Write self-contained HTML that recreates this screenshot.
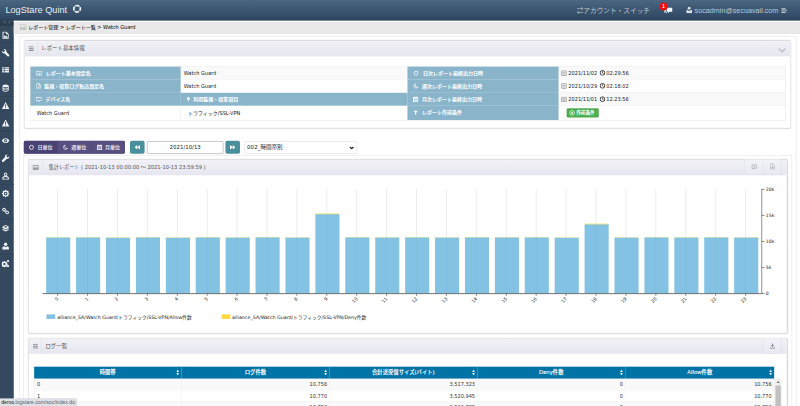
<!DOCTYPE html>
<html lang="ja">
<head>
<meta charset="utf-8">
<title>LogStare Quint</title>
<style>
html,body{margin:0;padding:0;width:800px;height:406px;overflow:hidden;background:#fff;}
#root{position:absolute;left:0;top:0;width:1920px;height:975px;transform:scale(0.416667);transform-origin:0 0;overflow:hidden;background:#fff;
  font-family:"DejaVu Sans","Liberation Sans","Noto Sans CJK JP",sans-serif;font-size:12px;color:#333;-webkit-text-stroke:0;}
#root *{box-sizing:border-box;}
.abs{position:absolute;}
#hdr{left:0;top:0;width:1920px;height:50px;background:linear-gradient(#4a6681,#2f4762 90%,#243850);}
#logo{-webkit-text-stroke:0;left:13px;top:7px;font:22px/32px "Liberation Sans","Noto Sans CJK JP",sans-serif;color:#e8eef4;white-space:nowrap;}
.hr{-webkit-text-stroke:0;color:#bcc7d3;font:16px/24px "Liberation Sans","Noto Sans CJK JP",sans-serif;white-space:nowrap;top:13px;}
#side{left:0;top:49px;width:33px;height:927px;background:#34495e;}
#side .tog{height:15px;background:#2b3c4e;color:#5d7186;font:bold 11px/13px "Liberation Mono",monospace;text-align:center;letter-spacing:-1px;border-bottom:1px solid #3d5268;}
#side .it{height:42.200px;border-bottom:1px solid #2a3b4d;border-top:1px solid #3f566e;position:relative;}
#side .it:last-child{border-bottom:none;}
#side .it svg{position:absolute;left:4px;top:10px;width:19px;height:19px;fill:#eef2f5;}
#bc{left:33px;top:50px;width:1887px;height:31px;background:#e9e9e9;border-top:3px solid #fff;border-bottom:1px solid #dcdcdc;font-size:12px;line-height:26px;color:#2a2a2a;-webkit-text-stroke:0.200px #2a2a2a;padding-left:35px;white-space:nowrap;}
.outer{border:1px solid #e0e0e0;background:#fff;box-shadow:0 0 2px rgba(0,0,0,.08);}
.panel{border:1px solid #d6d6d6;border-radius:4px;background:#fff;box-shadow:0 0 3px rgba(0,0,0,.16);}
.ph{left:0;top:0;right:0;height:36.500px;background:linear-gradient(#f1f1f7,#e6e6f0);border-bottom:1px solid #e2e2ea;border-radius:3px 3px 0 0;}
.ph .ic{left:0;top:0;width:31px;height:35.500px;border-right:1px solid #dcdce4;}
.ph .tt{left:40px;top:0;line-height:35.500px;font-size:13px;color:#555;white-space:nowrap;}
.ph .btn{top:-1px;width:44px;height:37px;border-left:1px solid #dcdce4;border-bottom:1px solid #dcdce4;background:linear-gradient(#f2f2f8,#e9e9f2);}
.cell{font-size:12px;line-height:30px;white-space:nowrap;border-bottom:1px solid #e4e4e4;}
.lab{background:#8ab4c9;color:#fff;font-weight:500;-webkit-text-stroke:0.250px #fff;border-bottom:1px solid #a9c8d8;border-right:1px solid #a9c8d8;}
.val{background:#fff;color:#222;border-right:1px solid #e4e4e4;}
.val.alt{background:#f9f9f9;}
.dt svg{position:absolute;}
.tbtn{top:0;height:31px;color:#e9e6f2;font-weight:500;-webkit-text-stroke:0.150px #e9e6f2;font-size:12px;line-height:31px;white-space:nowrap;}
.th{top:0;height:29.200px;background:#0073a6;color:#fff;font-weight:500;-webkit-text-stroke:0.250px #fff;font-size:12.800px;line-height:27px;text-align:center;border-right:1px solid #5aa7c9;white-space:nowrap;}
.td{height:27.500px;font-size:12px;line-height:27px;border-bottom:1px solid #e3e3e3;border-right:1px solid #e3e3e3;color:#333;white-space:nowrap;padding:0 5px 0 6px;}
.tick{font-size:11px;fill:#222;font-family:"DejaVu Sans","Liberation Sans",sans-serif;}
</style>
</head>
<body>
<div id="root">

<div id="hdr" class="abs">
  <div id="logo" class="abs">LogStare Quint</div>
  <svg class="abs" style="left:172.500px;top:9.200px" width="24" height="24" viewBox="0 0 24 24"><circle cx="12" cy="12" r="7.900" fill="none" stroke="#f6f8fb" stroke-width="4" stroke-dasharray="10.410 2" stroke-dashoffset="5.200"/></svg>
  <div class="hr abs" style="left:1384px;font-size:16px;">⇄アカウント・スイッチ</div>
  <svg class="abs" style="left:1593px;top:18px" width="21" height="15" viewBox="0 0 21 15"><path d="M7 0h14v10h-7l-3.500 3.500V10H7z" fill="#f4f6f9"/><path d="M1 3.500h4.500v8H8v3.500L4.500 12H1z" fill="#cbd5df"/></svg>
  <div class="abs" style="left:1583px;top:6px;width:19px;height:19px;border-radius:10px;background:#f20d0d;color:#fff;font:bold 11px/19px 'Liberation Sans',sans-serif;text-align:center;">1</div>
  <svg class="abs" style="left:1647px;top:16px" width="14" height="16" viewBox="0 0 14 16"><circle cx="7" cy="3.800" r="3.400" fill="#dbe2ea"/><path d="M0 16V10.500c0-1.500 1.500-2.500 3.500-2.700L7 10.800l3.500-3c2 .2 3.500 1.200 3.500 2.700V16z" fill="#dbe2ea"/></svg>
  <div class="hr abs" style="left:1667px;font-family:'Liberation Sans',sans-serif;font-size:17.300px;">socadmin@secuavail.com</div>
  <svg class="abs" style="left:1875px;top:19px" width="15" height="12" viewBox="0 0 15 12"><path d="M0 0h10.500v2.200H0zM0 3.200h10.500v2.200H0zM0 6.500h10.500v2.200H0zM0 9.800h10.500V12H0z" fill="#b9c4cf"/><path d="M11.500 3.500l3.500 2.500-3.500 2.500z" fill="#b9c4cf"/></svg>
</div>

<div id="side" class="abs">
  <div class="tog">&lt; &gt;</div>
  <div class="it"><svg viewBox="0 0 18 18"><path d="M2 1h9l5 5v11H2z M4 3v12h10V7h-4V3z M5 11l2-2 2 3 2-1.5 2 2.5v1H5z" fill-rule="evenodd"/></svg></div>
  <div class="it"><svg viewBox="0 0 18 18"><path d="M4.200 .8a5.200 5.200 0 0 1 6.400 6.300l6.300 6.300a2.600 2.600 0 0 1-3.700 3.700L6.900 10.800A5.200 5.200 0 0 1 .7 4.300l3.100 3.100 2.700-.7.700-2.700z"/></svg></div>
  <div class="it"><svg viewBox="0 0 18 18"><path d="M1 2h4v3H1zM6.500 2H17v3H6.500zM1 6.500h4v3H1zM6.500 6.500H17v3H6.500zM1 11h4v3H1zM6.500 11H17v3H6.500z"/></svg></div>
  <div class="it"><svg viewBox="0 0 18 18"><path d="M2 4c0-1.700 3.100-3 7-3s7 1.300 7 3v10c0 1.700-3.100 3-7 3s-7-1.300-7-3z M4 6.300v2.400c.8.800 2.700 1.300 5 1.300s4.200-.5 5-1.300V6.300C12.800 6.800 11 7 9 7s-3.800-.2-5-.7z M4 11.300v2.400c.8.800 2.700 1.300 5 1.300s4.200-.5 5-1.300v-2.400c-1.200.5-3 .7-5 .7s-3.800-.2-5-.7z" fill-rule="evenodd"/></svg></div>
  <div class="it"><svg viewBox="0 0 18 18"><path d="M9 1l8.500 15.500H.5z M8 6v5.500h2V6z M8 12.700v2h2v-2z" fill-rule="evenodd"/></svg></div>
  <div class="it"><svg viewBox="0 0 18 18"><path d="M9 1l8.500 15.500H.5z M8 6v5.500h2V6z M8 12.700v2h2v-2z" fill-rule="evenodd"/></svg></div>
  <div class="it"><svg viewBox="0 0 18 18"><path d="M.5 9c2-3.600 5-5.500 8.500-5.500s6.500 1.900 8.500 5.500c-2 3.600-5 5.500-8.500 5.500S2.500 12.600.5 9z M9 5.500a3.500 3.500 0 1 0 0 7 3.500 3.500 0 0 0 0-7z M9 7.300a1.700 1.700 0 1 1 0 3.400 1.700 1.700 0 0 1 0-3.400z" fill-rule="evenodd"/></svg></div>
  <div class="it"><svg viewBox="0 0 18 18"><path d="M13.800 .8a5.200 5.200 0 0 0-6.400 6.300l-6.300 6.300a2.600 2.600 0 0 0 3.700 3.700l6.300-6.300a5.200 5.200 0 0 0 6.200-6.500l-3.100 3.100-2.700-.7-.7-2.700z"/></svg></div>
  <div class="it"><svg viewBox="0 0 18 18"><path d="M9 1a4 4 0 0 1 4 4c0 1.600-.8 3-2 3.800 3 .7 5.500 2.700 5.500 5.200v3h-15v-3c0-2.500 2.500-4.500 5.500-5.200A4.500 4.500 0 0 1 5 5a4 4 0 0 1 4-4z M9 3a2 2 0 0 0 0 4 2 2 0 0 0 0-4z M4 14v1h10v-1c0-1.500-2.500-3-5-3s-5 1.500-5 3z" fill-rule="evenodd"/></svg></div>
  <div class="it"><svg viewBox="0 0 18 18"><path d="M17.52 7.82L17.52 10.18L15.58 10.72L14.87 12.44L15.86 14.19L14.19 15.86L12.44 14.87L10.72 15.58L10.18 17.52L7.82 17.52L7.28 15.58L5.56 14.87L3.81 15.86L2.14 14.19L3.13 12.44L2.42 10.72L0.48 10.18L0.48 7.82L2.42 7.28L3.13 5.56L2.14 3.81L3.81 2.14L5.56 3.13L7.28 2.42L7.82 0.48L10.18 0.48L10.72 2.42L12.44 3.13L14.19 2.14L15.86 3.81L14.87 5.56L15.58 7.28z M9 4.800a4.200 4.200 0 1 0 0 8.400 4.200 4.200 0 0 0 0-8.400z" fill-rule="evenodd"/><circle cx="9" cy="9" r="1.900"/></svg></div>
  <div class="it"><svg viewBox="0 0 18 18"><g fill="none" stroke="#eef2f5" stroke-width="2.300"><ellipse cx="5.600" cy="6" rx="3.300" ry="2.800" transform="rotate(35 5.600 6)"/><ellipse cx="12.400" cy="12" rx="3.300" ry="2.800" transform="rotate(35 12.400 12)"/></g><path d="M7.500 7.500l3 3" stroke="#c3ccd5" stroke-width="2.400" fill="none"/></svg></div>
  <div class="it"><svg viewBox="0 0 18 18"><path d="M9 1l7 3.500v3L9 11 2 7.500v-3z M9 3L5 5l4 2 4-2z M2 9.500l7 3.500 7-3.500v3L9 16l-7-3.500z" fill-rule="evenodd"/></svg></div>
  <div class="it"><svg viewBox="0 0 18 18"><circle cx="9" cy="5" r="3.800"/><path d="M1.500 17v-4c0-2 2-3.500 4.500-3.800l3 2.300 3-2.300c2.500.3 4.500 1.800 4.500 3.800v4z"/></svg></div>
  <div class="it"><svg viewBox="0 0 18 18"><path d="M5 3h2.500l.4 1.700 1.300.6 1.500-.9 1.700 1.700-.9 1.500.6 1.300 1.700.4v2.500l-1.700.4-.6 1.300.9 1.500-1.700 1.700-1.500-.9-1.300.6-.4 1.600H5l-.4-1.600-1.300-.6-1.500.9L.1 14.500l.9-1.500-.6-1.300L0 11.500V9l.4-.1.600-1.300-.9-1.500 1.700-1.700 1.500.9 1.300-.6z M6.200 7.800a2.500 2.500 0 1 0 0 5 2.500 2.500 0 0 0 0-5z" fill-rule="evenodd"/><circle cx="14.500" cy="3.500" r="2.500"/><circle cx="14.500" cy="15" r="2.500"/></svg></div>
</div>

<div id="bc" class="abs">レポート管理 &gt; レポート一覧 &gt; Watch Guard</div>
<svg class="abs" style="left:48px;top:58px" width="16" height="14" viewBox="0 0 16 14"><rect x="0" y="0" width="16" height="14" rx="1" fill="#bcc2bc"/><rect x="1.800" y="1.800" width="12.400" height="10.400" fill="#e2e6e2"/><path d="M2 12V9.500l3-3.500 2.500 2.500L11 5l3 4.500V12z" fill="#c0c7c0"/><circle cx="5" cy="4.800" r="1.400" fill="#fff"/></svg>

<div class="abs outer" style="left:47px;top:87px;width:1864px;height:900px;"></div>

<div class="abs panel" style="left:58px;top:98px;width:1840px;height:210px;">
  <div class="abs ph">
    <div class="abs ic"><svg class="abs" style="left:10px;top:12px" width="12" height="12" viewBox="0 0 12 12"><path d="M0 0h12v2.600H0zM0 4.500h12v2.600H0zM0 9h12v2.600H0z" fill="#888"/></svg></div>
    <div class="abs tt">レポート基本情報</div>
    <svg class="abs" style="right:10px;top:15px" width="20" height="14" viewBox="0 0 20 14"><path d="M2 2.500l8 8 8-8" fill="none" stroke="#c4c4cb" stroke-width="3.600"/></svg>
  </div>
  <div id="info" class="abs" style="left:13px;top:60px;width:1813px;height:130px;border:1px solid #dcdcdc;">
<div class="abs cell lab" style="left:0px;top:0px;width:361px;height:31.4px;"><svg class="abs" style="left:13px;top:10px" width="14" height="12" viewBox="0 0 14 12"><path d="M0 0h14v12H0z M1.500 1.500v9h11v-9z M3 9l2.500-3.500 2 2L10 4l1.500 5z" fill="#fff" fill-rule="evenodd"/></svg><span class="abs" style="left:37px">レポート基本設定名</span></div>
<div class="abs cell val alt" style="left:361px;top:0px;width:544px;height:31.4px;padding-left:7px;">Watch Guard</div>
<div class="abs cell lab" style="left:905px;top:0px;width:363px;height:31.4px;"><svg class="abs" style="left:14px;top:9px" width="13" height="13" viewBox="0 0 13 13"><circle cx="6.500" cy="6.500" r="4.800" fill="none" stroke="#fff" stroke-width="2"/></svg><span class="abs" style="left:37px">日次レポート最終出力日時</span></div>
<div class="abs cell val alt" style="left:1268px;top:0px;width:543px;height:31.4px;border-right:none;"><svg class="abs" style="left:6px;top:9px" width="13" height="13" viewBox="0 0 13 13"><path d="M.8 .8h11.400v11.400H.8z" fill="#fff" stroke="#6a6a6a" stroke-width="1.600"/><path d="M3 4.300h7M3 6.500h7M3 8.800h7" stroke="#808080" stroke-width="1.200" fill="none"/></svg><span class="abs" style="left:23px">2021/11/02</span><svg class="abs" style="left:98px;top:8px" width="14" height="14" viewBox="0 0 14 14"><circle cx="7" cy="7" r="5.700" fill="none" stroke="#222" stroke-width="2.100"/><path d="M7 3.300V7l2.600 1.500" fill="none" stroke="#222" stroke-width="1.700"/></svg><span class="abs" style="left:114px">02:29:56</span></div>
<div class="abs cell lab" style="left:0px;top:31.4px;width:361px;height:31.3px;"><svg class="abs" style="left:14px;top:9px" width="11" height="13" viewBox="0 0 11 13"><path d="M0 0h7l4 4v9H0z M1.500 1.500v10h8V5H6V1.500z M3 7h5v1H3z M3 9h5v1H3z" fill="#fff" fill-rule="evenodd"/></svg><span class="abs" style="left:33px">監視・収集ログ取込設定名</span></div>
<div class="abs cell val" style="left:361px;top:31.4px;width:544px;height:31.3px;padding-left:7px;">Watch Guard</div>
<div class="abs cell lab" style="left:905px;top:31.4px;width:363px;height:31.3px;"><svg class="abs" style="left:14px;top:9px" width="12" height="13" viewBox="0 0 12 13"><path d="M5.500 1.200a5.200 5.200 0 1 0 5.500 7.300A4.600 4.600 0 0 1 5.500 1.200z" fill="none" stroke="#fff" stroke-width="1.800" stroke-linejoin="round"/></svg><span class="abs" style="left:35px">週次レポート最終出力日時</span></div>
<div class="abs cell val" style="left:1268px;top:31.4px;width:543px;height:31.3px;border-right:none;"><svg class="abs" style="left:6px;top:9px" width="13" height="13" viewBox="0 0 13 13"><path d="M.8 .8h11.400v11.400H.8z" fill="#fff" stroke="#6a6a6a" stroke-width="1.600"/><path d="M3 4.300h7M3 6.500h7M3 8.800h7" stroke="#808080" stroke-width="1.200" fill="none"/></svg><span class="abs" style="left:23px">2021/10/29</span><svg class="abs" style="left:98px;top:8px" width="14" height="14" viewBox="0 0 14 14"><circle cx="7" cy="7" r="5.700" fill="none" stroke="#222" stroke-width="2.100"/><path d="M7 3.300V7l2.600 1.500" fill="none" stroke="#222" stroke-width="1.700"/></svg><span class="abs" style="left:114px">02:18:02</span></div>
<div class="abs cell lab" style="left:0px;top:62.7px;width:361px;height:31.3px;"><svg class="abs" style="left:13px;top:10px" width="14" height="12" viewBox="0 0 14 12"><path d="M0 0h14v9H0z M1.500 1.500v6h11v-6z M4 10.500h6V12H4z" fill="#fff" fill-rule="evenodd"/></svg><span class="abs" style="left:36px">デバイス名</span></div>
<div class="abs cell lab" style="left:361px;top:62.7px;width:544px;height:31.3px;"><svg class="abs" style="left:14px;top:9px" width="9" height="13" viewBox="0 0 9 13"><path d="M3 0h4L5.500 4.500H9L2.500 13 4 7H0z" fill="#fff"/></svg><span class="abs" style="left:30px">利用監視・収集項目</span></div>
<div class="abs cell lab" style="left:905px;top:62.7px;width:363px;height:31.3px;"><svg class="abs" style="left:13px;top:8px" width="13" height="14" viewBox="0 0 13 14"><path d="M0 2h13v12H0z M2.500 0h2v3h-2zM8.500 0h2v3h-2z" fill="#fff"/><path d="M1.200 5h10.600M4.700 5v8M8.300 5v8M1.200 7.800h10.600M1.200 10.500h10.600" stroke="#8ab4c9" stroke-width=".9" fill="none"/></svg><span class="abs" style="left:35px">月次レポート最終出力日時</span></div>
<div class="abs cell val alt" style="left:1268px;top:62.7px;width:543px;height:31.3px;border-right:none;"><svg class="abs" style="left:6px;top:9px" width="13" height="13" viewBox="0 0 13 13"><path d="M.8 .8h11.400v11.400H.8z" fill="#fff" stroke="#6a6a6a" stroke-width="1.600"/><path d="M3 4.300h7M3 6.500h7M3 8.800h7" stroke="#808080" stroke-width="1.200" fill="none"/></svg><span class="abs" style="left:23px">2021/11/01</span><svg class="abs" style="left:98px;top:8px" width="14" height="14" viewBox="0 0 14 14"><circle cx="7" cy="7" r="5.700" fill="none" stroke="#222" stroke-width="2.100"/><path d="M7 3.300V7l2.600 1.500" fill="none" stroke="#222" stroke-width="1.700"/></svg><span class="abs" style="left:114px">12:23:56</span></div>
<div class="abs cell val" style="left:0px;top:94px;width:361px;height:34px;padding-left:15px;border-bottom:none;line-height:35px;">Watch Guard</div>
<div class="abs cell val" style="left:361px;top:94px;width:544px;height:34px;padding-left:17px;border-bottom:none;line-height:35px;">トラフィック/SSL-VPN</div>
<div class="abs cell lab" style="left:905px;top:94px;width:363px;height:34px;border-bottom:none;line-height:32px;"><svg class="abs" style="left:14px;top:11px" width="11" height="11" viewBox="0 0 11 11"><path d="M0 0h11L6.800 5v6L4.200 9V5z" fill="#fff"/></svg><span class="abs" style="left:35px">レポート作成条件</span></div>
<div class="abs cell val" style="left:1268px;top:94px;width:543px;height:34px;border-right:none;border-bottom:none;"><div class="abs" style="left:19px;top:6px;width:77px;height:22px;border-radius:3px;background:#4cae4c;border:1px solid #43a043;color:#fff;font-size:11px;line-height:20px;"><svg class="abs" style="left:5px;top:3px" width="14" height="14" viewBox="0 0 14 14"><circle cx="7" cy="7" r="5.600" fill="none" stroke="#fff" stroke-width="1.700"/><circle cx="7" cy="7" r="2.200" fill="#fff"/></svg><span class="abs" style="left:22px;font-weight:500;-webkit-text-stroke:0.200px #fff;">作成条件</span></div></div>
  </div>
</div>

<!-- toolbar -->
<div class="abs" style="left:57px;top:338px;width:243px;height:31px;border-radius:4px;background:#4b4372;overflow:hidden;">
  <div class="abs tbtn" style="left:0;width:81px;background:#4a4272;"><svg class="abs" style="left:12px;top:9px" width="13" height="13" viewBox="0 0 13 13"><circle cx="6.500" cy="6.500" r="4.800" fill="none" stroke="#fff" stroke-width="2"/></svg><span class="abs" style="left:33px">日単位</span></div>
  <div class="abs tbtn" style="left:81px;width:81px;background:#574f80;border-left:1px solid #4f4777;"><svg class="abs" style="left:12px;top:9px" width="12" height="13" viewBox="0 0 12 13"><path d="M5.500 1.200a5.200 5.200 0 1 0 5.500 7.300A4.600 4.600 0 0 1 5.500 1.200z" fill="none" stroke="#f0eef6" stroke-width="1.800" stroke-linejoin="round"/></svg><span class="abs" style="left:32px">週単位</span></div>
  <div class="abs tbtn" style="left:162px;width:81px;background:#574f80;border-left:1px solid #4f4777;"><svg class="abs" style="left:12px;top:8px" width="14" height="14" viewBox="0 0 13 14"><path d="M0 2h13v12H0z M2.500 0h2v3h-2zM8.500 0h2v3h-2z" fill="#f0eef6"/><path d="M1.200 5h10.600M4.700 5v8M8.300 5v8M1.200 7.800h10.600M1.200 10.500h10.600" stroke="#574f80" stroke-width=".9" fill="none"/></svg><span class="abs" style="left:32px">月単位</span></div>
</div>
<div class="abs" style="left:312px;top:338px;width:35px;height:31px;border-radius:4px;background:#4a8f9c;"><svg class="abs" style="left:11px;top:10px" width="13" height="11" viewBox="0 0 13 11"><path d="M6.500 0v11L0 5.500zM13 0v11L6.500 5.500z" fill="#fff"/></svg></div>
<div class="abs" style="left:353px;top:338.500px;width:183px;height:30px;border:1.500px solid #7d7d7d;border-radius:2px;background:#fff;text-align:center;font-size:13px;line-height:26px;color:#222;">2021/10/13</div>
<div class="abs" style="left:541px;top:338px;width:35px;height:31px;border-radius:4px;background:#4a8f9c;"><svg class="abs" style="left:11px;top:10px" width="13" height="11" viewBox="0 0 13 11"><path d="M0 0v11l6.500-5.500zM6.500 0v11L13 5.500z" fill="#fff"/></svg></div>
<div class="abs" style="left:587px;top:338.500px;width:270px;height:30px;border:1px solid #ccc;border-radius:4px;background:#fff;font-size:13.300px;line-height:28px;color:#222;padding-left:5px;">002_時間帯別<svg class="abs" style="right:6px;top:11px" width="12" height="8" viewBox="0 0 12 8"><path d="M1.500 1.500l4.500 4.500 4.500-4.500" fill="none" stroke="#111" stroke-width="2.800"/></svg></div>

<!-- wrapper -->
<div class="abs outer" style="left:56px;top:373px;width:1845px;height:700px;border-color:#dedede;"></div>

<!-- panel 2 -->
<div class="abs panel" style="left:68px;top:383px;width:1821px;height:417px;">
<svg class="abs" style="left:0;top:0" width="1821" height="417" viewBox="0 0 1821 417">
<line x1="69.2" y1="69.5" x2="69.2" y2="320.2" stroke="#e6e6e6" stroke-width="1.800"/>
<line x1="141.0" y1="69.5" x2="141.0" y2="320.2" stroke="#e6e6e6" stroke-width="1.800"/>
<line x1="212.8" y1="69.5" x2="212.8" y2="320.2" stroke="#e6e6e6" stroke-width="1.800"/>
<line x1="284.6" y1="69.5" x2="284.6" y2="320.2" stroke="#e6e6e6" stroke-width="1.800"/>
<line x1="356.4" y1="69.5" x2="356.4" y2="320.2" stroke="#e6e6e6" stroke-width="1.800"/>
<line x1="428.2" y1="69.5" x2="428.2" y2="320.2" stroke="#e6e6e6" stroke-width="1.800"/>
<line x1="499.9" y1="69.5" x2="499.9" y2="320.2" stroke="#e6e6e6" stroke-width="1.800"/>
<line x1="571.7" y1="69.5" x2="571.7" y2="320.2" stroke="#e6e6e6" stroke-width="1.800"/>
<line x1="643.5" y1="69.5" x2="643.5" y2="320.2" stroke="#e6e6e6" stroke-width="1.800"/>
<line x1="715.3" y1="69.5" x2="715.3" y2="320.2" stroke="#e6e6e6" stroke-width="1.800"/>
<line x1="787.1" y1="69.5" x2="787.1" y2="320.2" stroke="#e6e6e6" stroke-width="1.800"/>
<line x1="858.9" y1="69.5" x2="858.9" y2="320.2" stroke="#e6e6e6" stroke-width="1.800"/>
<line x1="930.7" y1="69.5" x2="930.7" y2="320.2" stroke="#e6e6e6" stroke-width="1.800"/>
<line x1="1002.5" y1="69.5" x2="1002.5" y2="320.2" stroke="#e6e6e6" stroke-width="1.800"/>
<line x1="1074.3" y1="69.5" x2="1074.3" y2="320.2" stroke="#e6e6e6" stroke-width="1.800"/>
<line x1="1146.1" y1="69.5" x2="1146.1" y2="320.2" stroke="#e6e6e6" stroke-width="1.800"/>
<line x1="1217.8" y1="69.5" x2="1217.8" y2="320.2" stroke="#e6e6e6" stroke-width="1.800"/>
<line x1="1289.6" y1="69.5" x2="1289.6" y2="320.2" stroke="#e6e6e6" stroke-width="1.800"/>
<line x1="1361.4" y1="69.5" x2="1361.4" y2="320.2" stroke="#e6e6e6" stroke-width="1.800"/>
<line x1="1433.2" y1="69.5" x2="1433.2" y2="320.2" stroke="#e6e6e6" stroke-width="1.800"/>
<line x1="1505.0" y1="69.5" x2="1505.0" y2="320.2" stroke="#e6e6e6" stroke-width="1.800"/>
<line x1="1576.8" y1="69.5" x2="1576.8" y2="320.2" stroke="#e6e6e6" stroke-width="1.800"/>
<line x1="1648.6" y1="69.5" x2="1648.6" y2="320.2" stroke="#e6e6e6" stroke-width="1.800"/>
<line x1="1720.4" y1="69.5" x2="1720.4" y2="320.2" stroke="#e6e6e6" stroke-width="1.800"/>
<rect x="41.8" y="185.9" width="57.8" height="134.3" fill="#75bbe0" fill-opacity="0.9"/>
<rect x="41.8" y="185.5" width="57.8" height="0.8" fill="#e9dc55"/>
<rect x="113.6" y="185.7" width="57.8" height="134.5" fill="#75bbe0" fill-opacity="0.9"/>
<rect x="113.6" y="185.3" width="57.8" height="0.8" fill="#e9dc55"/>
<rect x="185.4" y="186.6" width="57.8" height="133.6" fill="#75bbe0" fill-opacity="0.9"/>
<rect x="185.4" y="186.2" width="57.8" height="0.8" fill="#e9dc55"/>
<rect x="257.2" y="185.5" width="57.8" height="134.7" fill="#75bbe0" fill-opacity="0.9"/>
<rect x="257.2" y="185.1" width="57.8" height="0.8" fill="#e9dc55"/>
<rect x="329.0" y="186.4" width="57.8" height="133.8" fill="#75bbe0" fill-opacity="0.9"/>
<rect x="329.0" y="186.0" width="57.8" height="0.8" fill="#e9dc55"/>
<rect x="400.8" y="185.6" width="57.8" height="134.6" fill="#75bbe0" fill-opacity="0.9"/>
<rect x="400.8" y="185.2" width="57.8" height="0.8" fill="#e9dc55"/>
<rect x="472.5" y="186.1" width="57.8" height="134.1" fill="#75bbe0" fill-opacity="0.9"/>
<rect x="472.5" y="185.7" width="57.8" height="0.8" fill="#e9dc55"/>
<rect x="544.3" y="185.4" width="57.8" height="134.8" fill="#75bbe0" fill-opacity="0.9"/>
<rect x="544.3" y="185.0" width="57.8" height="0.8" fill="#e9dc55"/>
<rect x="616.1" y="186.2" width="57.8" height="134.0" fill="#75bbe0" fill-opacity="0.9"/>
<rect x="616.1" y="185.8" width="57.8" height="0.8" fill="#e9dc55"/>
<rect x="687.9" y="129.8" width="57.8" height="190.4" fill="#75bbe0" fill-opacity="0.9"/>
<rect x="687.9" y="128.5" width="57.8" height="1.7" fill="#e9dc55"/>
<rect x="759.7" y="185.5" width="57.8" height="134.7" fill="#75bbe0" fill-opacity="0.9"/>
<rect x="759.7" y="185.1" width="57.8" height="0.8" fill="#e9dc55"/>
<rect x="831.5" y="185.9" width="57.8" height="134.3" fill="#75bbe0" fill-opacity="0.9"/>
<rect x="831.5" y="185.5" width="57.8" height="0.8" fill="#e9dc55"/>
<rect x="903.3" y="185.7" width="57.8" height="134.5" fill="#75bbe0" fill-opacity="0.9"/>
<rect x="903.3" y="185.3" width="57.8" height="0.8" fill="#e9dc55"/>
<rect x="975.1" y="186.1" width="57.8" height="134.1" fill="#75bbe0" fill-opacity="0.9"/>
<rect x="975.1" y="185.7" width="57.8" height="0.8" fill="#e9dc55"/>
<rect x="1046.9" y="185.5" width="57.8" height="134.7" fill="#75bbe0" fill-opacity="0.9"/>
<rect x="1046.9" y="185.1" width="57.8" height="0.8" fill="#e9dc55"/>
<rect x="1118.7" y="185.7" width="57.8" height="134.5" fill="#75bbe0" fill-opacity="0.9"/>
<rect x="1118.7" y="185.3" width="57.8" height="0.8" fill="#e9dc55"/>
<rect x="1190.4" y="185.6" width="57.8" height="134.6" fill="#75bbe0" fill-opacity="0.9"/>
<rect x="1190.4" y="185.2" width="57.8" height="0.8" fill="#e9dc55"/>
<rect x="1262.2" y="186.4" width="57.8" height="133.8" fill="#75bbe0" fill-opacity="0.9"/>
<rect x="1262.2" y="186.0" width="57.8" height="0.8" fill="#e9dc55"/>
<rect x="1334.0" y="154.1" width="57.8" height="166.1" fill="#75bbe0" fill-opacity="0.9"/>
<rect x="1334.0" y="152.8" width="57.8" height="1.7" fill="#e9dc55"/>
<rect x="1405.8" y="186.1" width="57.8" height="134.1" fill="#75bbe0" fill-opacity="0.9"/>
<rect x="1405.8" y="185.7" width="57.8" height="0.8" fill="#e9dc55"/>
<rect x="1477.6" y="185.5" width="57.8" height="134.7" fill="#75bbe0" fill-opacity="0.9"/>
<rect x="1477.6" y="185.1" width="57.8" height="0.8" fill="#e9dc55"/>
<rect x="1549.4" y="185.9" width="57.8" height="134.3" fill="#75bbe0" fill-opacity="0.9"/>
<rect x="1549.4" y="185.5" width="57.8" height="0.8" fill="#e9dc55"/>
<rect x="1621.2" y="185.6" width="57.8" height="134.6" fill="#75bbe0" fill-opacity="0.9"/>
<rect x="1621.2" y="185.2" width="57.8" height="0.8" fill="#e9dc55"/>
<rect x="1693.0" y="186.0" width="57.8" height="134.2" fill="#75bbe0" fill-opacity="0.9"/>
<rect x="1693.0" y="185.6" width="57.8" height="0.8" fill="#e9dc55"/>
<line x1="69.2" y1="185.9" x2="69.2" y2="320.2" stroke="#1a4f7a" stroke-opacity="0.025" stroke-width="1.800"/>
<line x1="141.0" y1="185.7" x2="141.0" y2="320.2" stroke="#1a4f7a" stroke-opacity="0.025" stroke-width="1.800"/>
<line x1="212.8" y1="186.6" x2="212.8" y2="320.2" stroke="#1a4f7a" stroke-opacity="0.025" stroke-width="1.800"/>
<line x1="284.6" y1="185.5" x2="284.6" y2="320.2" stroke="#1a4f7a" stroke-opacity="0.025" stroke-width="1.800"/>
<line x1="356.4" y1="186.4" x2="356.4" y2="320.2" stroke="#1a4f7a" stroke-opacity="0.025" stroke-width="1.800"/>
<line x1="428.2" y1="185.6" x2="428.2" y2="320.2" stroke="#1a4f7a" stroke-opacity="0.025" stroke-width="1.800"/>
<line x1="499.9" y1="186.1" x2="499.9" y2="320.2" stroke="#1a4f7a" stroke-opacity="0.025" stroke-width="1.800"/>
<line x1="571.7" y1="185.4" x2="571.7" y2="320.2" stroke="#1a4f7a" stroke-opacity="0.025" stroke-width="1.800"/>
<line x1="643.5" y1="186.2" x2="643.5" y2="320.2" stroke="#1a4f7a" stroke-opacity="0.025" stroke-width="1.800"/>
<line x1="715.3" y1="129.8" x2="715.3" y2="320.2" stroke="#1a4f7a" stroke-opacity="0.025" stroke-width="1.800"/>
<line x1="787.1" y1="185.5" x2="787.1" y2="320.2" stroke="#1a4f7a" stroke-opacity="0.025" stroke-width="1.800"/>
<line x1="858.9" y1="185.9" x2="858.9" y2="320.2" stroke="#1a4f7a" stroke-opacity="0.025" stroke-width="1.800"/>
<line x1="930.7" y1="185.7" x2="930.7" y2="320.2" stroke="#1a4f7a" stroke-opacity="0.025" stroke-width="1.800"/>
<line x1="1002.5" y1="186.1" x2="1002.5" y2="320.2" stroke="#1a4f7a" stroke-opacity="0.025" stroke-width="1.800"/>
<line x1="1074.3" y1="185.5" x2="1074.3" y2="320.2" stroke="#1a4f7a" stroke-opacity="0.025" stroke-width="1.800"/>
<line x1="1146.1" y1="185.7" x2="1146.1" y2="320.2" stroke="#1a4f7a" stroke-opacity="0.025" stroke-width="1.800"/>
<line x1="1217.8" y1="185.6" x2="1217.8" y2="320.2" stroke="#1a4f7a" stroke-opacity="0.025" stroke-width="1.800"/>
<line x1="1289.6" y1="186.4" x2="1289.6" y2="320.2" stroke="#1a4f7a" stroke-opacity="0.025" stroke-width="1.800"/>
<line x1="1361.4" y1="154.1" x2="1361.4" y2="320.2" stroke="#1a4f7a" stroke-opacity="0.025" stroke-width="1.800"/>
<line x1="1433.2" y1="186.1" x2="1433.2" y2="320.2" stroke="#1a4f7a" stroke-opacity="0.025" stroke-width="1.800"/>
<line x1="1505.0" y1="185.5" x2="1505.0" y2="320.2" stroke="#1a4f7a" stroke-opacity="0.025" stroke-width="1.800"/>
<line x1="1576.8" y1="185.9" x2="1576.8" y2="320.2" stroke="#1a4f7a" stroke-opacity="0.025" stroke-width="1.800"/>
<line x1="1648.6" y1="185.6" x2="1648.6" y2="320.2" stroke="#1a4f7a" stroke-opacity="0.025" stroke-width="1.800"/>
<line x1="1720.4" y1="186.0" x2="1720.4" y2="320.2" stroke="#1a4f7a" stroke-opacity="0.025" stroke-width="1.800"/>
<line x1="33.0" y1="320.7" x2="1761.0" y2="320.7" stroke="#555" stroke-width="2"/>
<line x1="69.2" y1="320.2" x2="69.2" y2="326.2" stroke="#555" stroke-width="1.500"/>
<text class="tick" transform="translate(72.2 334.2) rotate(-45)" text-anchor="end">0</text>
<line x1="141.0" y1="320.2" x2="141.0" y2="326.2" stroke="#555" stroke-width="1.500"/>
<text class="tick" transform="translate(144.0 334.2) rotate(-45)" text-anchor="end">1</text>
<line x1="212.8" y1="320.2" x2="212.8" y2="326.2" stroke="#555" stroke-width="1.500"/>
<text class="tick" transform="translate(215.8 334.2) rotate(-45)" text-anchor="end">2</text>
<line x1="284.6" y1="320.2" x2="284.6" y2="326.2" stroke="#555" stroke-width="1.500"/>
<text class="tick" transform="translate(287.6 334.2) rotate(-45)" text-anchor="end">3</text>
<line x1="356.4" y1="320.2" x2="356.4" y2="326.2" stroke="#555" stroke-width="1.500"/>
<text class="tick" transform="translate(359.4 334.2) rotate(-45)" text-anchor="end">4</text>
<line x1="428.2" y1="320.2" x2="428.2" y2="326.2" stroke="#555" stroke-width="1.500"/>
<text class="tick" transform="translate(431.2 334.2) rotate(-45)" text-anchor="end">5</text>
<line x1="499.9" y1="320.2" x2="499.9" y2="326.2" stroke="#555" stroke-width="1.500"/>
<text class="tick" transform="translate(502.9 334.2) rotate(-45)" text-anchor="end">6</text>
<line x1="571.7" y1="320.2" x2="571.7" y2="326.2" stroke="#555" stroke-width="1.500"/>
<text class="tick" transform="translate(574.7 334.2) rotate(-45)" text-anchor="end">7</text>
<line x1="643.5" y1="320.2" x2="643.5" y2="326.2" stroke="#555" stroke-width="1.500"/>
<text class="tick" transform="translate(646.5 334.2) rotate(-45)" text-anchor="end">8</text>
<line x1="715.3" y1="320.2" x2="715.3" y2="326.2" stroke="#555" stroke-width="1.500"/>
<text class="tick" transform="translate(718.3 334.2) rotate(-45)" text-anchor="end">9</text>
<line x1="787.1" y1="320.2" x2="787.1" y2="326.2" stroke="#555" stroke-width="1.500"/>
<text class="tick" transform="translate(790.1 334.2) rotate(-45)" text-anchor="end">10</text>
<line x1="858.9" y1="320.2" x2="858.9" y2="326.2" stroke="#555" stroke-width="1.500"/>
<text class="tick" transform="translate(861.9 334.2) rotate(-45)" text-anchor="end">11</text>
<line x1="930.7" y1="320.2" x2="930.7" y2="326.2" stroke="#555" stroke-width="1.500"/>
<text class="tick" transform="translate(933.7 334.2) rotate(-45)" text-anchor="end">12</text>
<line x1="1002.5" y1="320.2" x2="1002.5" y2="326.2" stroke="#555" stroke-width="1.500"/>
<text class="tick" transform="translate(1005.5 334.2) rotate(-45)" text-anchor="end">13</text>
<line x1="1074.3" y1="320.2" x2="1074.3" y2="326.2" stroke="#555" stroke-width="1.500"/>
<text class="tick" transform="translate(1077.3 334.2) rotate(-45)" text-anchor="end">14</text>
<line x1="1146.1" y1="320.2" x2="1146.1" y2="326.2" stroke="#555" stroke-width="1.500"/>
<text class="tick" transform="translate(1149.1 334.2) rotate(-45)" text-anchor="end">15</text>
<line x1="1217.8" y1="320.2" x2="1217.8" y2="326.2" stroke="#555" stroke-width="1.500"/>
<text class="tick" transform="translate(1220.8 334.2) rotate(-45)" text-anchor="end">16</text>
<line x1="1289.6" y1="320.2" x2="1289.6" y2="326.2" stroke="#555" stroke-width="1.500"/>
<text class="tick" transform="translate(1292.6 334.2) rotate(-45)" text-anchor="end">17</text>
<line x1="1361.4" y1="320.2" x2="1361.4" y2="326.2" stroke="#555" stroke-width="1.500"/>
<text class="tick" transform="translate(1364.4 334.2) rotate(-45)" text-anchor="end">18</text>
<line x1="1433.2" y1="320.2" x2="1433.2" y2="326.2" stroke="#555" stroke-width="1.500"/>
<text class="tick" transform="translate(1436.2 334.2) rotate(-45)" text-anchor="end">19</text>
<line x1="1505.0" y1="320.2" x2="1505.0" y2="326.2" stroke="#555" stroke-width="1.500"/>
<text class="tick" transform="translate(1508.0 334.2) rotate(-45)" text-anchor="end">20</text>
<line x1="1576.8" y1="320.2" x2="1576.8" y2="326.2" stroke="#555" stroke-width="1.500"/>
<text class="tick" transform="translate(1579.8 334.2) rotate(-45)" text-anchor="end">21</text>
<line x1="1648.6" y1="320.2" x2="1648.6" y2="326.2" stroke="#555" stroke-width="1.500"/>
<text class="tick" transform="translate(1651.6 334.2) rotate(-45)" text-anchor="end">22</text>
<line x1="1720.4" y1="320.2" x2="1720.4" y2="326.2" stroke="#555" stroke-width="1.500"/>
<text class="tick" transform="translate(1723.4 334.2) rotate(-45)" text-anchor="end">23</text>
<line x1="1759.0" y1="69.5" x2="1759.0" y2="321.2" stroke="#a8a8a8" stroke-width="3"/>
<line x1="1759.0" y1="320.2" x2="1766.0" y2="320.2" stroke="#444" stroke-width="1.500"/>
<text class="tick" x="1769.0" y="324.2">0</text>
<line x1="1759.0" y1="257.8" x2="1766.0" y2="257.8" stroke="#444" stroke-width="1.500"/>
<text class="tick" x="1769.0" y="261.8">5k</text>
<line x1="1759.0" y1="195.4" x2="1766.0" y2="195.4" stroke="#444" stroke-width="1.500"/>
<text class="tick" x="1769.0" y="199.4">10k</text>
<line x1="1759.0" y1="132.9" x2="1766.0" y2="132.9" stroke="#444" stroke-width="1.500"/>
<text class="tick" x="1769.0" y="136.9">15k</text>
<line x1="1759.0" y1="70.5" x2="1766.0" y2="70.5" stroke="#444" stroke-width="1.500"/>
<text class="tick" x="1769.0" y="74.5">20k</text>
<rect x="42.5" y="370.5" width="21" height="11" fill="#83c1e2"/>
<text x="68.5" y="381.0" font-size="11.400" fill="#222" style="font-family:'DejaVu Sans','Liberation Sans','Noto Sans CJK JP',sans-serif">alliance_SA/Watch Guard/トラフィック/SSL-VPN/Allow件数</text>
<rect x="463.0" y="370.5" width="21" height="11" fill="#ffd740"/>
<text x="488.0" y="381.0" font-size="11.400" fill="#222" style="font-family:'DejaVu Sans','Liberation Sans','Noto Sans CJK JP',sans-serif">alliance_SA/Watch Guard/トラフィック/SSL-VPN/Deny件数</text>
</svg>
  <div class="abs ph">
    <div class="abs ic" style="width:33px"><svg class="abs" style="left:9px;top:12px" width="15" height="12" viewBox="0 0 15 12"><rect width="15" height="12" rx="1" fill="#8e8e8e"/><rect x="1.500" y="1.500" width="12" height="9" fill="#dcdce2"/><path d="M1.500 10.500V8l3-3 2.500 2.500L10.500 4l3 4v2.500z" fill="#9a9a9e"/></svg></div>
    <div class="abs tt" id="t2" style="font-size:12.300px;left:48px">集計レポート ( 2021-10-13 00:00:00 ～ 2021-10-13 23:59:59 )</div>
    <div class="abs btn" style="right:57px;"><svg class="abs" style="left:15px;top:10px" width="14" height="14" viewBox="0 0 14 14"><circle cx="7" cy="7" r="5.800" fill="none" stroke="#9a9a9a" stroke-width="1.500"/><circle cx="7" cy="7" r="1.700" fill="#9a9a9a"/></svg></div>
    <div class="abs btn" style="right:13px;border-right:1px solid #dcdce4;"><svg class="abs" style="left:16px;top:9px" width="12" height="15" viewBox="0 0 12 15"><path d="M.7.700h6.800l3.800 3.800v9.800H.7z" fill="none" stroke="#a2a2a2" stroke-width="1.400"/><path d="M3 8h6v4.500H3z" fill="#bdbdbd"/><path d="M4.500 3.500h3v3h-3z" fill="#c8c8c8"/></svg></div>
  </div>
</div>

<!-- panel 3 -->
<div class="abs panel" style="left:68px;top:812px;width:1821px;height:300px;">
  <div class="abs ph">
    <div class="abs ic"><svg class="abs" style="left:10px;top:12px" width="12" height="12" viewBox="0 0 12 12"><path d="M0 0h12v2.600H0zM0 4.500h12v2.600H0zM0 9h12v2.600H0z" fill="#888"/></svg></div>
    <div class="abs tt">ログ一覧</div>
    <div class="abs btn" style="right:13px;border-right:1px solid #dcdce4;"><svg class="abs" style="left:16px;top:12px" width="12" height="13" viewBox="0 0 12 13"><path d="M6 0v7M3 4.500L6 8l3-3.500" fill="none" stroke="#6e6e6e" stroke-width="1.700"/><path d="M.7 9v3h10.600V9" fill="none" stroke="#6e6e6e" stroke-width="1.600"/></svg></div>
  </div>
<div class="abs th" style="left:13px;top:67px;width:354px;">時間帯<svg class="abs" style="right:5.500px;top:7px" width="7" height="14" viewBox="0 0 7 14"><path d="M3.500 0L7 6H0zM3.500 14L0 8h7z" fill="#e6eff5"/></svg></div>
<div class="abs th" style="left:367px;top:67px;width:355px;">ログ件数<svg class="abs" style="right:5.500px;top:7px" width="7" height="14" viewBox="0 0 7 14"><path d="M3.500 0L7 6H0zM3.500 14L0 8h7z" fill="#e6eff5"/></svg></div>
<div class="abs th" style="left:722px;top:67px;width:355px;">合計送受信サイズ(バイト)<svg class="abs" style="right:5.500px;top:7px" width="7" height="14" viewBox="0 0 7 14"><path d="M3.500 0L7 6H0zM3.500 14L0 8h7z" fill="#e6eff5"/></svg></div>
<div class="abs th" style="left:1077px;top:67px;width:355px;">Deny件数<svg class="abs" style="right:5.500px;top:7px" width="7" height="14" viewBox="0 0 7 14"><path d="M3.500 0L7 6H0zM3.500 14L0 8h7z" fill="#e6eff5"/></svg></div>
<div class="abs th" style="left:1432px;top:67px;width:357px;border-right:none;">Allow件数<svg class="abs" style="right:5.500px;top:7px" width="7" height="14" viewBox="0 0 7 14"><path d="M3.500 0L7 6H0zM3.500 14L0 8h7z" fill="#e6eff5"/></svg></div>
<div class="abs td" style="left:13px;top:96.2px;width:354px;text-align:left;background:#f9f9f9;border-left:1px solid #e3e3e3;">0</div>
<div class="abs td" style="left:367px;top:96.2px;width:355px;text-align:right;background:#f9f9f9;">10,756</div>
<div class="abs td" style="left:722px;top:96.2px;width:355px;text-align:right;background:#f9f9f9;">3,517,323</div>
<div class="abs td" style="left:1077px;top:96.2px;width:355px;text-align:right;background:#f9f9f9;">0</div>
<div class="abs td" style="left:1432px;top:96.2px;width:357px;text-align:right;background:#f9f9f9;">10,756</div>
<div class="abs td" style="left:13px;top:123.7px;width:354px;text-align:left;background:#fff;border-left:1px solid #e3e3e3;">1</div>
<div class="abs td" style="left:367px;top:123.7px;width:355px;text-align:right;background:#fff;">10,770</div>
<div class="abs td" style="left:722px;top:123.7px;width:355px;text-align:right;background:#fff;">3,520,945</div>
<div class="abs td" style="left:1077px;top:123.7px;width:355px;text-align:right;background:#fff;">0</div>
<div class="abs td" style="left:1432px;top:123.7px;width:357px;text-align:right;background:#fff;">10,770</div>
<div class="abs td" style="left:13px;top:151.2px;width:354px;text-align:left;background:#f9f9f9;border-left:1px solid #e3e3e3;">2</div>
<div class="abs td" style="left:367px;top:151.2px;width:355px;text-align:right;background:#f9f9f9;">10,753</div>
<div class="abs td" style="left:722px;top:151.2px;width:355px;text-align:right;background:#f9f9f9;">3,510,788</div>
<div class="abs td" style="left:1077px;top:151.2px;width:355px;text-align:right;background:#f9f9f9;">0</div>
<div class="abs td" style="left:1432px;top:151.2px;width:357px;text-align:right;background:#f9f9f9;">10,753</div>
<div class="abs td" style="left:13px;top:178.7px;width:354px;text-align:left;background:#fff;border-left:1px solid #e3e3e3;">3</div>
<div class="abs td" style="left:367px;top:178.7px;width:355px;text-align:right;background:#fff;">10,790</div>
<div class="abs td" style="left:722px;top:178.7px;width:355px;text-align:right;background:#fff;">3,525,102</div>
<div class="abs td" style="left:1077px;top:178.7px;width:355px;text-align:right;background:#fff;">0</div>
<div class="abs td" style="left:1432px;top:178.7px;width:357px;text-align:right;background:#fff;">10,790</div>
<div class="abs" style="left:1790px;top:95px;width:17px;height:200px;background:#f1f1f1;"><svg class="abs" style="left:4px;top:6px" width="9" height="6" viewBox="0 0 9 6"><path d="M4.500 0L9 5.500H0z" fill="#888"/></svg><div class="abs" style="left:2px;top:17px;width:13px;height:200px;background:#c1c1c1;"></div></div>
</div>

<!-- status bar -->
<div class="abs" style="left:0;top:956px;width:185px;height:20px;background:#dee1e6;border-top:1px solid #c8cbd0;border-right:1px solid #c8cbd0;border-radius:0 4px 0 0;font:12.300px/18px 'Liberation Sans',sans-serif;color:#5f6368;padding-left:3px;white-space:nowrap;"><span style="color:#202124">demo.</span>logstare.com/soc/index.do</div>

</div>
</body>
</html>
